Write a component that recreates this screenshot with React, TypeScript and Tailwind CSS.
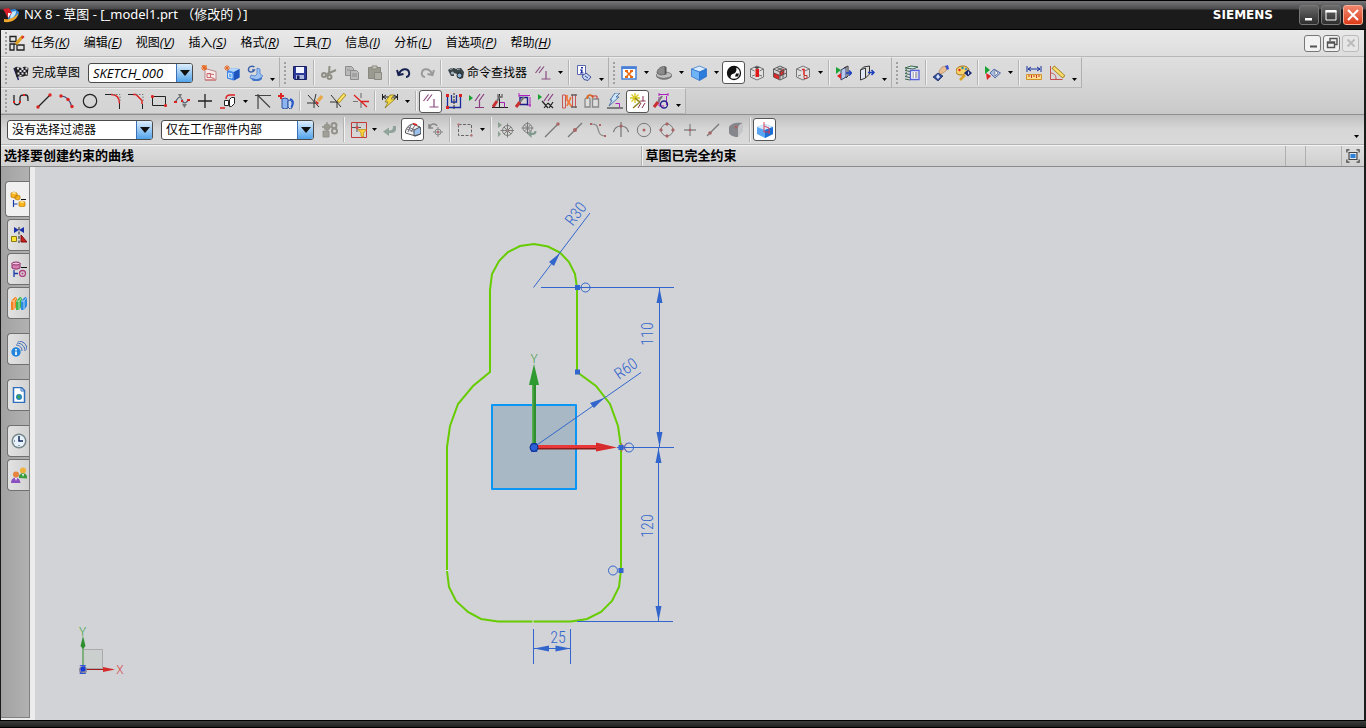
import React from 'react';
import clsx from 'clsx';

const cjk = "font-['Noto_Sans','Noto_Sans_CJK_SC',sans-serif]";

const icons: Record<string, React.ReactNode> = {
  // menu bar
  task: <g fill="none" stroke="#222" strokeWidth="1.3"><path d="M1 1.500h6v5h-6zM1 9h4v6h-4zM8 10h7v5h-7zM5 9h3" /><path d="M7 9l7-8" stroke="#e0a020" strokeWidth="3" /><path d="M13 1.500l1.500 1.500" stroke="#d33" strokeWidth="3" /></g>,
  // standard toolbar
  flag: <g><path d="M1 3l4.500 12" stroke="#226" strokeWidth="1.500" /><path d="M1.500 3c3-3 6 1 8 0 2-2 3-1 6 0l-1 8c-3-1-4 1-7 1-2-1-2 0-4 0z" fill="#222" /><path d="M4 2.500h2v2h-2zM8.500 3h2v2h-2zM12.500 2.500h2v2h-2zM6.500 5h2v2h-2zM10.500 5h2v2h-2zM4.500 7.500h2v2h-2zM8.500 7.500h2v2h-2zM12.500 7.500h1.500v2h-1.500zM6.500 10h2v1.500h-2z" fill="#e4e4f0" /></g>,
  sketchNew: <g fill="none" stroke="#b88"><path d="M4 3.500l11 3v8.500h-11z" fill="#f6ecec" /><path d="M6 8.500h3.500v4h-3.500zM6 8.500l7 1M9.500 12.500l4 1M4 15l11 0" stroke="#c66" /><path d="M0 0h6v5h-2z" fill="#e8701a" stroke="none" opacity=".6" /><path d="M0 3h6M3 0v6M1 1l4 4M5 1l-4 4" stroke="#e8601a" strokeWidth=".9" /></g>,
  orient: <g><path d="M3 5l6-2 6.500 1v8.500l-6 3-6.500-2z" fill="#3f86e6" /><path d="M3 5l6-2 6.500 1-5.500 3z" fill="#b4d6fb" /><path d="M10 7l5.500-3v8.500l-5.500 3z" fill="#1d55bc" /><path d="M4.500 8l3.500.7v4.300l-3.500-.7z" fill="#6db0f5" stroke="#cfe3ff" /><path d="M0 3h6M3 0v6M1 1l4 4M5 1l-4 4" stroke="#e8601a" strokeWidth=".9" /></g>,
  reattach: <g><path d="M7.500 2c-3-2-6.500 0-6 3s5 2.500 6 0h-2.500" fill="none" stroke="#3b62ac" strokeWidth="1.500" /><path d="M10 3l3 1v5l3 2-5 4-8-2 1-3 4 1 2-2z" fill="#9cc2f2" stroke="#4a7fd0" strokeWidth=".8" /><path d="M4 13c3 1.500 7 2 11-1v2c-3 3-8 3-10 1z" fill="#3f73c8" /></g>,
  save: <g><path d="M1.500 1.500h13v13h-12l-1-1z" fill="#2d3a9b" stroke="#16205f" /><path d="M4 2h8v6h-8z" fill="#f4f6ff" /><path d="M4 10h8v4h-8z" fill="#aeb8dc" /><path d="M5 10.500h2.500v3.500h-2.500z" fill="#16205f" /></g>,
  cut: <g stroke="#8e8e84" fill="none" strokeWidth="2"><path d="M8.500 1l-.500 8M15 5l-9 4" /><circle cx="8.500" cy="12" r="2" /><circle cx="3" cy="10" r="2" /></g>,
  copy: <g fill="#b9b9b9" stroke="#8c8c8c"><path d="M1.500 1.500h6l2 2v7h-8z" /><path d="M6.500 5.500h6l2 2v7h-8z" /><path d="M8 9h5M8 11h5M3 5h3" /></g>,
  paste: <g fill="#9b9a90" stroke="#8a897f"><path d="M1.500 2.500h12v11h-12z" /><path d="M5 1h5v3h-5z" fill="#c4c4bc" /><path d="M7.500 7.500h7v7h-7z" fill="#aeaea6" /></g>,
  undo: <path d="M3 9c2-6 9-6 10-2 1 3-1 5-3 5M1 5l1.500 5 5-1" fill="none" stroke="#17214f" strokeWidth="2" />,
  redo: <path d="M13 9c-2-6-9-6-10-2-1 3 1 5 3 5M15 5l-1.500 5-5-1" fill="none" stroke="#9a9a9a" strokeWidth="2" />,
  finder: <g><path d="M0 5l3-2 3 0 2 1 2-1h3l3 4-1 6-3 1-3-2v-3l-3-1v3l-3 0z" fill="#39434a" /><circle cx="11.500" cy="10.500" r="2.500" fill="#88b4d8" stroke="#222" /><circle cx="4.500" cy="8" r="1.600" fill="#a8b4bc" /><path d="M2 4.500l3-1M9 4.500l3-.500" stroke="#a8b0b4" /></g>,
  constraint: <g stroke="#8a4b80" fill="none" strokeWidth="1.200"><path d="M0.500 8l5-6.500M4 8l5-6.500M11 6v8M6.500 14h9" /></g>,
  info: <g><path d="M1.500 .5h8v9h-8z" fill="#fff" stroke="#5868b0" /><path d="M5 2h2v1.500h-2zM4 4.500h2.500v3h1v1h-3.500v-1h1v-2h-1z" fill="#1a2c9c" /><path d="M6 11l4-3 5 4-3 3.500-4-1z" fill="#c4d4f2" stroke="#40539a" /><path d="M9 11l3 2" stroke="#40539a" /></g>,
  fit: <g><path d="M1 2h14v12h-14z" fill="#fff" stroke="#4a80d6" strokeWidth="1.500" /><path d="M.5 1.500h15v2.500h-15z" fill="#4a80d6" /><path d="M5 6l6 6M11 6l-6 6" stroke="#e86a10" strokeWidth="1.500" /><path d="M4 5h3v2h-3zM9 5h3v2h-3zM4 11h3v2h-3zM9 11h3v2h-3z" fill="#e86a10" /></g>,
  clip: <g><path d="M0 10c1-2 4-3 8-3 4 0 7 1 8 3-1 4-14 5-16 0z" fill="#c0c0c0" stroke="#666" strokeWidth=".7" /><path d="M1 8c0-4 4-7 8-6.500v8l-5 .500z" fill="#8a8a8a" stroke="#555" strokeWidth=".7" /><path d="M9 1.500l1.500.500v7.500l-1.500 0z" fill="#555" /><path d="M0 10c2 4 13 4 16 0v1c-2 5-14 5-16 0z" fill="#777" /></g>,
  cube: <g stroke="#2a6cc9" strokeWidth=".7"><path d="M0.500 4l8-3 7 3-7 3z" fill="#d8ecfd" /><path d="M0.500 4l8 3v8.500l-8-4z" fill="#6fb4f5" /><path d="M8.500 7l7-3v7.500l-7 4z" fill="#2d7ddb" /></g>,
  contrast: <g><circle cx="8" cy="8" r="6.500" fill="#fff" stroke="#111" strokeWidth="1.300" /><path d="M9.500 1.500c-8-2-10.500 8-5 12 0-4 1.500-4.500 3.500-5s3.500-4 1.500-7z" fill="#111" /><path d="M10 8.500h3l-1 3h-3z" fill="#111" /></g>,
  cubeR1: <g fill="none" stroke="#777"><path d="M1.500 4l6.500-3 6.500 3v8l-6.500 3-6.500-3z" fill="#e0e0e0" /><path d="M1.500 4l4 2M14.500 4l-4 2M3 11l3-1M13 11l-3-1" /><path d="M6.500 4h3.500v8h-3.500z" fill="#e01818" stroke="none" /><path d="M5 2.500l3-1 3 1-3 1.500z" fill="#444" stroke="none" /></g>,
  cubeR2: <g fill="none" stroke="#555" strokeWidth=".9"><path d="M1.500 4l6.500-3 6.500 3v8l-6.500 3-6.500-3z" fill="#d0d0d0" /><path d="M2 8l5 2v4l-5-2zM8 6l4-2v5l-4 2z" fill="#e42a2a" stroke="#a11" strokeWidth=".5" /><path d="M1.500 4l6.500 3 6.500-3M8 7v8M5 2.500l6 3M11 2.500l-6 3M1.500 8l6.500 3 6.500-3M11 6v7" /></g>,
  cubeR3: <g fill="none" stroke="#777"><path d="M1.500 4l6.500-3 6.500 3v8l-6.500 3-6.500-3z" fill="#e0e0e0" /><path d="M1.500 4l5 2M14.500 4l-5 2M3 11l3-1" /><path d="M7 4.500h2v5.500" stroke="#d22" strokeWidth="1.500" /><path d="M9 10.500h3v3h-3z" stroke="#b33" /></g>,
  moveIn: <g><path d="M5 5l5-3v10l-5 3z" fill="#b7c9ef" stroke="#3a3f60" /><path d="M8 3l4-2v10l-2 2" fill="none" stroke="#333" /><path d="M10 8h5M13 5.500l2.500 2.500-2.500 2.500" stroke="#1a3ec0" fill="none" strokeWidth="1.500" /><path d="M0 2l5 3-5 4z" fill="#1aa233" /><path d="M5 8l-4 3 4 3z" fill="#d22" /></g>,
  moveOut: <g><path d="M1.500 5l5-2v10l-5 2z" fill="#dfe6f6" stroke="#333" /><path d="M1.500 5l3-3 6-1v8l-4 4" fill="none" stroke="#333" /><path d="M9 7.500h6M12.500 5l2.500 2.500-2.500 2.500" stroke="#1a3ec0" fill="none" strokeWidth="1.500" /></g>,
  layers: <g><path d="M1 3l6-2 7 1-5 2z" fill="#d8ebe0" stroke="#3d6655" /><path d="M1 5.500l5 1M1 8.500l5 1M1 11.500l5 1M1 14l5 1M1 5.500l2-1M1 8.500l2-1M1 11.500l2-1" fill="none" stroke="#3d6655" /><path d="M6.500 5.500h8.500v9h-8.500z" fill="#fff" stroke="#5560d8" strokeWidth="1.300" /><path d="M8.500 8h1.500M11 8h2.500M8.500 10h1.500M11 10h2.500M8.500 12h1.500M11 12h2.500" stroke="#667" /></g>,
  handTag: <g><path d="M6 6l3-4 4-1 1 4-4 3-3 1z" fill="#e7bf94" stroke="#a97a4c" strokeWidth=".6" /><path d="M12 1l3-1 1 4-2 1z" fill="#3a4fd0" /><path d="M0 12l5-4 5 3-5 5z" fill="#34509c" stroke="#111d50" strokeWidth=".7" /><path d="M5 9l2 3-2 2-2-2z" fill="#d8e4fa" /></g>,
  palette: <g><path d="M0 6c0-6 12-7 13-1 0 2-3 2-4 3s-1 2-4 2-5-1-5-4z" fill="#f6d268" stroke="#a8741a" /><circle cx="3.500" cy="5" r="1.200" fill="#d22" /><circle cx="6.500" cy="3" r="1.200" fill="#28a" /><circle cx="10" cy="4" r="1.200" fill="#48c" /><path d="M8 8l4-3.500 4 3.500-4 3.500z" fill="#1b2b6e" /><path d="M12 6l1.500 2-1.500 2z" fill="#dfe6ff" /><path d="M4 15l5-5" stroke="#d8a322" strokeWidth="2.500" /></g>,
  tagFlow: <g><path d="M0 1l5 4-5 4z" fill="#1aa233" /><path d="M1 8l5 3-4 4z" fill="#d22" /><path d="M5 8l4-4 6.500 4-5.500 5z" fill="#a9bce0" stroke="#5a6ea8" /><path d="M10 5l3 3-3 3z" fill="#fff" stroke="#345" strokeWidth=".5" /></g>,
  measure: <g><path d="M1 1v6M15 1v6M2 4h12M5 2l-3 2 3 2M11 2l3 2-3 2" stroke="#16309a" fill="none" /><path d="M.5 9.500h15v5h-15z" fill="#ffe08a" stroke="#d1922a" /><path d="M3 10v2M5.500 10v3M8 10v2M10.500 10v3M13 10v2" stroke="#c33" /></g>,
  angle: <g fill="none"><path d="M1.500 1v13.500h12M1 8c4 0 6 2 6 6" stroke="#c34d4d" /><path d="M4 2l11 10" stroke="#a37b17" strokeWidth="4" /><path d="M4.500 2.500l10 9" stroke="#f7dd6e" strokeWidth="2.500" /></g>,
  // sketch curves
  profile: <g fill="none" stroke="#222" strokeWidth="1.300"><path d="M1 2v6c0 5 6 5 6 0v-3c0-3 2-3 4-3h2c2 0 2 2 2 6" /><path d="M0 8h2v2h-2zM6 8h2v2h-2zM10 1h2v2h-2z" fill="#d22" stroke="none" /></g>,
  line: <g><path d="M2 14l12-12" stroke="#222" strokeWidth="1.200" /><circle cx="2" cy="14" r="1.700" fill="#d22" /><circle cx="14" cy="2" r="1.700" fill="#d22" /></g>,
  arc: <g><path d="M2 3c6 0 9 4 11 11" stroke="#447" fill="none" strokeWidth="1.200" /><circle cx="2" cy="3" r="1.700" fill="#d22" /><circle cx="9" cy="6.500" r="1.700" fill="#d22" /><circle cx="13" cy="13.500" r="1.700" fill="#d22" /></g>,
  circle: <circle cx="8" cy="8" r="6.700" fill="none" stroke="#222" strokeWidth="1.200" />,
  fillet: <g fill="none"><path d="M0 1.500h6M14.500 10v6" stroke="#222" /><path d="M6 1.500c6 0 8.500 3 8.500 9" stroke="#d22" strokeWidth="1.500" /><path d="M8 1.500h7v7" stroke="#777" strokeDasharray="1.500 1.500" /></g>,
  chamfer: <g fill="none"><path d="M0 1.500h5M14.500 11v5" stroke="#222" /><path d="M5 1.500h3l6 6v3.500" stroke="#d22" strokeWidth="1.500" /><path d="M8 1.500h7v7" stroke="#777" strokeDasharray="1.500 1.500" /></g>,
  rect: <g><path d="M1.500 3.500h13v9h-13z" fill="none" stroke="#222" /><circle cx="1.500" cy="3.500" r="1.600" fill="#d22" /><circle cx="14.500" cy="12.500" r="1.600" fill="#d22" /></g>,
  spline: <g><path d="M0 9c3 0 3-5 6-5 2 0 2 6 5 6 2 0 2-3 5-3" fill="none" stroke="#456" strokeWidth="1.200" /><path d="M6 3l4 10" stroke="#999" /><path d="M4 1h4l-2 4zM8 11h5l-2.500 4z" fill="#777" /><path d="M0 8h3v2h-3zM13 6h3v2h-3zM7 7h2v2h-2z" fill="#d22" /></g>,
  point: <path d="M8 1v14M1 8h14" stroke="#222" strokeWidth="1.300" />,
  offset: <g fill="none"><path d="M0 15h5M6 6c0-3 2-4 4-4h5" stroke="#d22" strokeWidth="1.500" /><path d="M4.500 7.500h4v5h-4zM9.500 6.500l2-2h3v6l-3 3h-2z" fill="#fff" stroke="#222" /></g>,
  pattern: <path d="M0 2.500h16M3 1v15M3 2.500l12 12" stroke="#444" fill="none" strokeWidth="1.200" />,
  project: <g><path d="M4 6l3-1 3 1v9l-3 1-3-1z" fill="#8cb4ee" stroke="#33539e" /><path d="M10 8l2-1 2 2v6l-2 1-2-2z" fill="#c7d8f5" stroke="#33539e" /><path d="M3 0v6M0 3h6" stroke="#d22" strokeWidth="2" /><path d="M12 6c4 1 4 6 1 8" stroke="#1a4fd0" fill="none" strokeWidth="1.500" /></g>,
  quickTrim: <g><path d="M1 2l11 12M7 15v-6l2-8M0 10h9" stroke="#333" fill="none" /><path d="M11 8l4-5" stroke="#e8a848" strokeWidth="3.500" /><path d="M8 7l4 3-2 2z" fill="#d22" /></g>,
  quickExtend: <g><path d="M1 2l10 12M7 15v-6M0 9h8" stroke="#333" fill="none" /><path d="M8 9l7-8" stroke="#a8820e" strokeWidth="3.500" /><path d="M8.500 8.500l6-7" stroke="#ffe76a" strokeWidth="2" /></g>,
  corner: <g fill="none" strokeWidth="1.200"><path d="M8 0v5M8 9v6M0 8.500h5" stroke="#777" /><path d="M1 2l13 12M8 8.500h8" stroke="#d22" strokeWidth="1.300" /></g>,
  rapidDim: <g><path d="M.5 1v6M15.500 1v6M1 4h14M4 2l-3 2 3 2M12 2l3 2-3 2" fill="none" stroke="#222" /><path d="M8 2h4l-3 4h4l-10 9 3-6h-3z" fill="#f4d940" stroke="#7c6a12" strokeWidth=".7" /></g>,
  autoCon: <g fill="none"><path d="M1.500 2v12.500h13v-12.500M5.500 2v7h5v-7" stroke="#1a2c9c" strokeWidth="1.300" /><path d="M8 0v16" stroke="#222" strokeDasharray="2 1" /><path d="M0 1h3v3h-3zM13 1h3v3h-3zM0 13h3v3h-3z" fill="#d22" /></g>,
  showCon: <g><path d="M0 2l4 3-4 3z" fill="#18a030" /><path d="M6 8l5-7M10 8l5-7M10.500 8v6M6 14.500h9" stroke="#8a3b80" strokeWidth="1.200" fill="none" /></g>,
  wrench: <g><path d="M7.500 1v13M0 14.500h16" stroke="#222" fill="none" /><path d="M8 9.500h4.500v5" stroke="#a01fb0" fill="none" /><path d="M1 14l4-6" stroke="#c73030" strokeWidth="3" /><path d="M5 8l3-5" stroke="#777" strokeWidth="2" /><path d="M6 1v3h4v-3" stroke="#666" fill="none" strokeWidth="1.300" /></g>,
  wrenchDim: <g><path d="M4 2.500h11M4 0v4M15 4v10M12 12h4" stroke="#b01fc0" fill="none" /><path d="M5 4.500h7.500v7h-7.500z" stroke="#1b1b8c" strokeWidth="1.400" fill="none" /><path d="M1 14l4-5" stroke="#c73030" strokeWidth="3" /><path d="M5 9l4-5" stroke="#777" strokeWidth="2" /></g>,
  showNone: <g><path d="M0 1l4 3-4 3z" fill="#18a030" /><path d="M6 8l5-7M10 8l5-7" stroke="#8a3b80" strokeWidth="1.200" /><path d="M4 8l6 7M10 10l-4 5M10 10l5 5M15 9l-4 6" stroke="#222" strokeWidth="1.200" /></g>,
  mirror: <g fill="none"><path d="M1.500 15v-13h3v13zM11.500 1v14M14.500 1v14" stroke="#c55" /><path d="M6 2v5l5 7M6 13l4-9" stroke="#f07a3a" strokeWidth="1.800" /><path d="M10 2h6M10 14h6" stroke="#666" strokeWidth="1.500" /></g>,
  altSol: <g fill="none" stroke="#888"><path d="M1 14v-8l3-2 2 2v8zM8.500 14v-8h6v8z" fill="#ddd" strokeWidth="1.300" /><path d="M3 6c0-5 5-5 6-1" stroke="#d86a28" strokeWidth="1.800" /><path d="M8 3h5v3" stroke="#c33" /></g>,
  infer: <g><path d="M0 15h16" stroke="#222" fill="none" /><path d="M8.500 10.500h4v4" stroke="#b01fc0" fill="none" /><path d="M8 0h5l-4 4h3l-10 9 3-6h-2z" fill="#cde3f8" stroke="#37609b" strokeWidth=".8" /></g>,
  createCon: <g><path d="M5 0v10M0 5h10M1.500 1.500l7 7M8.500 1.500l-7 7" stroke="#d8c820" strokeWidth="1.300" /><path d="M5 5l5 4-7 6" stroke="#8c8424" fill="none" strokeWidth="1.500" /><path d="M13 3v5M10.500 8h5M8 15l3-5M12 15l3-5" stroke="#8a2b50" /></g>,
  dimSettings: <g><path d="M6 1.500h9M6 0v3M15 0v3M13.500 3v9" stroke="#b01fc0" fill="none" /><path d="M6 4v9h5" stroke="#b01fc0" fill="none" /><circle cx="11" cy="11.500" r="3.500" fill="none" stroke="#1b1b8c" strokeWidth="1.300" /><path d="M1 14l4-5" stroke="#c73030" strokeWidth="3" /><path d="M5 9l4-6" stroke="#777" strokeWidth="2" /></g>,
  // selection bar
  chain: <g fill="none" stroke="#92928a"><path d="M5 0v9M0 5h9" strokeWidth="1.300" /><circle cx="5" cy="5" r="2.500" strokeWidth="1.500" /><path d="M1 9h6v6h-6z" fill="#a09f98" /><circle cx="12" cy="3.500" r="2.500" strokeWidth="2" /><circle cx="12.500" cy="9" r="2.500" strokeWidth="2" /></g>,
  filter: <g fill="none"><path d="M.5 .5h15v15h-15z" stroke="#c33c3c" /><path d="M6 1v9M1 5.500h9" stroke="#555" /><circle cx="6" cy="5.500" r="1.500" fill="#d44" /><path d="M7 7.500h8.500l-3 3.500v4l-2.500-1v-3z" fill="#f9cf3a" stroke="#c08a14" strokeWidth=".7" /></g>,
  back: <path d="M14 4v3c0 4-4 4-7 4v3l-6-4.500 6-4v3c3 0 4-1 4-4.500z" fill="#8fa39b" />,
  eraser: <g stroke="#444" strokeWidth=".9"><path d="M.5 9c1-4 4-6.500 7-7l7.500 3c1 2 1 5 .500 7l-5 2-10-3z" fill="#f0f0f0" /><path d="M9 8l6-3c1 2 1 5 .500 7l-6.500 2z" fill="#9cc0ec" /><path d="M3 5l7 3M2 7l7 2.500M6 3l-3 7M10 3l-4 7" stroke="#667" /><path d="M8 1.500l4 1.500" stroke="#d22" strokeWidth="1.500" /></g>,
  rotSnap: <g fill="none" stroke="#888"><path d="M2 6c0-5 6-5 7-2M1 2v4h4" strokeWidth="1.500" /><circle cx="10" cy="10" r="3" /><path d="M10 5v10M5 10h10" /><circle cx="10" cy="10" r=".8" stroke="#b66" /></g>,
  marquee: <g fill="none"><path d="M1.500 2.500h13v11h-13z" stroke="#666" strokeDasharray="3 1.500" /><circle cx="1.500" cy="2.500" r="1.200" fill="#b77" /><circle cx="14.500" cy="13.500" r="1.200" fill="#b77" /></g>,
  snapAll: <g fill="none" stroke="#7c7c7c"><circle cx="9.500" cy="8.500" r="5" /><path d="M9.500 1.500v14M2.500 8.500h13.500M6 5l7 7M13 5l-7 7" /><path d="M0 0l4 3-4 3zM0 9l3 3-3 3z" fill="#8a9f90" stroke="none" /><circle cx="9.500" cy="8.500" r="1.500" fill="#a88" /></g>,
  snapNone: <g fill="none" stroke="#7c7c7c"><circle cx="6.500" cy="6" r="4.500" /><path d="M6.500 0v12M.5 6h12M3.500 3l6 6M9.500 3l-6 6" /><path d="M15.500 9c0 4-3 4-5 4v3l-4-4 4-3v2c2 0 3-1 3-2z" fill="#80998c" stroke="none" /></g>,
  endPt: <g><path d="M1 15l13-13" stroke="#777" strokeWidth="1.200" /><circle cx="14" cy="2" r="1.700" fill="#a66" /></g>,
  midPt: <g><path d="M1 15l14-14" stroke="#777" strokeWidth="1.200" /><circle cx="8" cy="8" r="2" fill="#a66" /></g>,
  ctrlPt: <g fill="none" stroke="#888" strokeWidth="1.200"><path d="M1 2c5 0 6 1 7 5s2 7 7 7" /><path d="M0 1h2v2h-2zM9 2h2v2h-2zM14 13h2v2h-2z" fill="#a66" stroke="none" /></g>,
  interPt: <g fill="none" stroke="#777" strokeWidth="1.200"><path d="M8 0v15M.5 10c2-8 13-8 15 0" /><circle cx="8" cy="4" r="1.600" fill="#a66" stroke="none" /></g>,
  centerPt: <g fill="none" stroke="#777"><circle cx="8" cy="8" r="6.700" /><circle cx="8" cy="8" r="1.500" fill="#a66" stroke="none" /></g>,
  quadPt: <g fill="none" stroke="#777"><circle cx="8" cy="8" r="6" /><path d="M8 0l2 2-2 2-2-2zM8 12l2 2-2 2-2-2zM2 6l2 2-2 2-2-2zM14 6l2 2-2 2-2-2z" fill="#a66" stroke="none" /></g>,
  existPt: <g><path d="M8 2v12M2 8h12" stroke="#888" strokeWidth="1.300" /><circle cx="8" cy="8" r="1.300" fill="#a66" /></g>,
  onCurve: <g><path d="M2 14l12-12" stroke="#777" strokeWidth="1.200" /><circle cx="5" cy="11" r="1.800" fill="#a66" /></g>,
  onFace: <g><path d="M1 5c2-4 8-5 14-4-3 1-5 3-5 6v8c-5 0-8-2-9-4z" fill="#85878c" /><path d="M15 1v8l-5 6v-8c0-3 2-5 5-6z" fill="#c4c6c8" /><circle cx="8" cy="5" r="1.500" fill="#a66" /></g>,
  wcsCube: <g><path d="M0 5l8-3 8 3v7l-8 4-8-4z" fill="#5aa6f4" /><path d="M0 5l8-3 8 3-8 3z" fill="#d4eaff" /><path d="M8 8l8-3v7l-8 4z" fill="#1d6fd6" /><path d="M7 0v10h6M7 4l5 2v6" fill="none" stroke="#e0384a" strokeWidth=".9" /></g>,
  fullscreen: <g fill="none" stroke="#444" strokeWidth="1.400"><path d="M1 4v-3h3M12 1h3v3M15 12v3h-3M4 15h-3v-3" /><path d="M3.500 4h9v8h-9z" fill="#fff" /><path d="M5 5.500h6v5h-6z" fill="#2f7fd8" stroke="none" /></g>,
  // resource bar
  assembly: <g><path d="M1 2l3-1 3 1v4l-3 1-3-1zM5 5l3-1 2 1v3l-2 1-3-1zM9 11l3-1 3 1v4l-3 1-3-1z" fill="#fcb61c" stroke="#b97a08" strokeWidth=".7" /><path d="M1 2l3 1 3-1-3-1zM9 11l3 1 3-1-3-1z" fill="#ffe9a0" /><path d="M3.500 9v7M3.500 13h4" stroke="#1a3ea8" strokeWidth="1.200" /><path d="M11 8.500h5" stroke="#111" /></g>,
  constraints: <g><path d="M3 0l5 3 5-3v6l-5-3-5 3z" fill="#1a2fa8" /><path d="M8 0v16" stroke="#222" strokeDasharray="3 1.500" /><path d="M.5 9.500h5v5h-5z" fill="#ffe333" stroke="#8c7a10" /><path d="M10 8v7h6z" fill="#c8201c" stroke="#801010" /></g>,
  partNav: <g fill="none"><path d="M1 2v5c2 1.500 6 1.500 8 0v-5z" fill="#d87fb2" stroke="#8c2f68" /><ellipse cx="5" cy="2.500" rx="4" ry="1.500" fill="#f4c4de" stroke="#8c2f68" /><path d="M3 9v7M3 12.500h4" stroke="#1a3ea8" strokeWidth="1.300" /><circle cx="11.500" cy="12.500" r="3" stroke="#b0407e" strokeWidth="1.300" /><circle cx="11.500" cy="12.500" r="1" fill="#b0407e" /><path d="M10 6.500h6" stroke="#111" /></g>,
  library: <g><path d="M0 6l4-4 2 0v9l-3 4h-3z" fill="#f58220" /><path d="M5 6l4-4 2 0v9l-3 4h-3z" fill="#3cb54a" /><path d="M10 6l4-4 2 0v9l-3 4h-3z" fill="#2c8be0" /><path d="M3 6v9M8 6v9M13 6v9M0 6h3l3-4M5 6h3l3-4M10 6h3l3-4" fill="none" stroke="#fff" strokeWidth=".6" /></g>,
  web: <g fill="none"><circle cx="5" cy="11" r="4.700" fill="#2384dc" /><path d="M5 8v1.500M5 10.500v3.500" stroke="#fff" strokeWidth="1.700" /><path d="M5 4c4 0 6 3 6 6M6 2c5 0 8 4 8 8M7 0c5 0 9 3 9 9" stroke="#3767b8" /></g>,
  history: <g><path d="M2.500 .5h8l3 3v12h-11z" fill="#fff" stroke="#2e6fbe" strokeWidth="1.500" /><path d="M10 .5v3.500h3.500" fill="none" stroke="#2e6fbe" /><circle cx="8" cy="10" r="3" fill="#2a87b8" /><path d="M6 9l2-1 1 2-1 2z" fill="#3faa3c" /></g>,
  clock: <g><circle cx="8" cy="8" r="7.500" fill="#788" /><circle cx="8" cy="8" r="6" fill="#e8f2fd" /><path d="M8 3v5h4" stroke="#112a55" fill="none" strokeWidth="1.500" /><path d="M3 8h1M8 12v1" stroke="#345" /></g>,
  roles: <g><circle cx="12" cy="3.500" r="3" fill="#f0b23c" /><path d="M8 11c-1-6 8-6 8-1v1.500z" fill="#3a9c3e" /><path d="M11 7h2l-1 3z" fill="#fff" /><circle cx="5" cy="7.500" r="3" fill="#e6843c" /><path d="M0 16c0-7 9-7 9.500 0z" fill="#8a50c0" /><path d="M4 11h2l-1 3z" fill="#fff" /></g>,
};

function Icon({ name }: { name: string }) {
  return <svg viewBox="0 0 16 16" className="size-4 shrink-0" aria-hidden="true">{icons[name]}</svg>;
}

function Tool({ name, on }: { name: string; on?: boolean }) {
  return <button type="button" aria-label={name} className={clsx('flex h-[23px] w-[23px] shrink-0 items-center justify-center', on && 'rounded-[3px] border border-[#555] bg-white')}>
      <Icon name={name} />
    </button>;
}

function Caret({ low, tight }: { low?: boolean; tight?: boolean }) {
  return <button type="button" aria-label="more" className={clsx('flex shrink-0 justify-center', tight ? 'w-2' : 'w-3', low ? 'self-end pb-1.5' : 'self-center')}>
      <svg viewBox="0 0 5 3" className="h-[3px] w-[5px]"><path d="M0 0h5l-2.500 3z" fill="#000" /></svg>
    </button>;
}

function Grip() {
  return <span className="flex h-full w-2 shrink-0 items-center justify-end pr-[2px]">
      <span className="h-[22px] border-l-2 border-dotted border-[#a0a0a0]" />
    </span>;
}

function Divider() {
  return <span className="flex w-1.5 shrink-0 justify-center self-stretch py-[2px]">
      <span className="border-l border-r border-l-[#b4b4b4] border-r-[#f2f2f2]" />
    </span>;
}

// "|" divider, "v" menu arrow, "," tight menu arrow, ">" overflow arrow, "*name" pressed button
function Tools({ items }: { items: string }) {
  return <>
      {items.split(' ').map((item, i) => {
      if (item === '|') return <Divider key={i} />;
      if (item === 'v') return <Caret key={i} />;
      if (item === ',') return <Caret key={i} tight />;
      if (item === '>') return <Caret key={i} low />;
      if (item[0] === '*') return <Tool key={i} name={item.slice(1)} on />;
      return <Tool key={i} name={item} />;
    })}
    </>;
}

function Band({ children }: { children: React.ReactNode }) {
  return <div className="flex items-center border-b border-r border-t border-b-[#b8b8b8] border-r-[#b0b0b0] border-t-[#ececec] bg-[#dadada]/60 pr-px">
      <Grip />
      {children}
    </div>;
}

function Dropdown({ label, value, className }: { label: string; value: string; className: string }) {
  return <div className={clsx('relative flex h-5 shrink-0 rounded-[3px] border border-[#4a4a4a] bg-white', className)}>
      <select aria-label={label} className="h-full w-full appearance-none bg-transparent pl-1 outline-none">
        <option>{value}</option>
      </select>
      <span className="pointer-events-none absolute inset-y-0 right-0 flex w-4 items-center justify-center rounded-r-[2px] border-l border-[#3b6fb8] bg-linear-to-b from-[#dceefc] to-[#4fa3ea]">
        <svg viewBox="0 0 10 6" className="h-1.5 w-2.5"><path d="M0 0h10l-5 6z" fill="#111" /></svg>
      </span>
    </div>;
}

const menus = [['任务', 'K'], ['编辑', 'E'], ['视图', 'V'], ['插入', 'S'], ['格式', 'R'], ['工具', 'T'], ['信息', 'I'], ['分析', 'L'], ['首选项', 'P'], ['帮助', 'H']];

function TitleBar() {
  const box = 'flex size-5 items-center justify-center rounded-[3px] border border-[#777] bg-linear-to-b from-[#6a6a6a] to-[#2e2e2e]';
  return <header className="flex h-[30px] shrink-0 items-center border-y border-black bg-[linear-gradient(#77777b_0,#4a4a4c_8px,#1b1b1b_9px)] pl-[3px] pr-[3px] text-white">
      <svg viewBox="0 0 16 16" className="size-4">
        <path d="M5 3l7-1 4 3c0 5-5 8-11 9z" fill="#2f86d8" />
        <path d="M8 5l5-1c0 4-2 6-6 8z" fill="#c4e8fb" />
        <path d="M0 2l6-1 3 5-4 5z" fill="#d8202c" />
        <path d="M5 6l3 0-3 5z" fill="#fff" />
        <path d="M1 12c5 1 11-1 14-6 0 6-6 10-14 9z" fill="#f3a62c" />
      </svg>
      <h1 className="ml-[5px] whitespace-pre text-[13px]">NX 8 - 草图 - [_model1.prt （修改的 ）]</h1>
      <span className="ml-auto mr-[26px] font-['DejaVu_Sans'] text-xs font-bold">SIEMENS</span>
      <div className="flex gap-[2px]">
        <button type="button" aria-label="最小化" className={box}><svg viewBox="0 0 14 14" className="size-3.5"><path d="M3 10h7v2.500h-7z" fill="#fff" /></svg></button>
        <button type="button" aria-label="最大化" className={box}><svg viewBox="0 0 14 14" className="size-3.5"><path d="M2 3h10v9h-10z" fill="none" stroke="#fff" /><path d="M1.500 2h11v2.500h-11z" fill="#fff" /></svg></button>
        <button type="button" aria-label="关闭" className="flex size-5 items-center justify-center rounded-[3px] border border-[#f4b09c] bg-linear-to-b from-[#f0866c] to-[#dc3a14]"><svg viewBox="0 0 14 14" className="size-3.5"><path d="M2 2l10 10M12 2l-10 10" stroke="#fff" strokeWidth="2" /></svg></button>
      </div>
    </header>;
}

function MenuBar() {
  const box = 'flex size-[17px] items-center justify-center rounded-[3px] border border-[#777] bg-[#f2f2f2]';
  return <div className="flex h-[27px] shrink-0 items-center border-b border-[#b8b8b8] bg-linear-to-b from-[#e9e9e9] to-[#dddddd]">
      <Grip />
      <svg viewBox="0 0 16 16" className="size-4" aria-hidden="true">{icons.task}</svg>
      <nav className="ml-1.5 flex gap-3.5">
        {menus.map(([name, key]) => <a key={name} href="#" className="whitespace-nowrap text-xs">
            {name}<i className="font-['Open_Sans'] text-[13px]">(<u>{key}</u>)</i>
          </a>)}
      </nav>
      <div className="ml-auto mr-[5px] flex gap-[2px]">
        <button type="button" aria-label="最小化窗口" className={box}><svg viewBox="0 0 12 12" className="size-3"><path d="M3 9.500h7" stroke="#555" strokeWidth="2" /></svg></button>
        <button type="button" aria-label="还原窗口" className={box}><svg viewBox="0 0 12 12" className="size-3"><path d="M4 4v-2.500h7v6h-2M1.500 5h7v5.500h-7zM1.500 6h7" fill="none" stroke="#555" strokeWidth="1.400" /></svg></button>
        <button type="button" aria-label="关闭窗口" disabled className="flex size-[17px] items-center justify-center rounded-[3px] border border-[#bbb] bg-[#e6e6e6]"><svg viewBox="0 0 12 12" className="size-3"><path d="M2.500 2.500l7 7M9.500 2.500l-7 7" stroke="#bbb" strokeWidth="2" /></svg></button>
      </div>
    </div>;
}

function Toolbars() {
  return <div className="shrink-0 border-b border-[#8f8f8f] bg-linear-to-b from-[#e0e0e0] to-[#c9c9c9]">
      <div className="flex h-[31px]">
        <Band>
          <button type="button" className="flex items-center text-xs">
            <span className="flex w-[23px] justify-center"><Icon name="flag" /></span>完成草图
          </button>
          <Dropdown label="草图名" value="SKETCH_000" className="ml-2 mr-1 w-[105px] font-['Open_Sans'] text-[13px] italic" />
          <Tools items="sketchNew orient reattach >" />
        </Band>
        <Band>
          <Tools items="save | cut copy paste | undo redo |" />
          <button type="button" className="mr-1 flex items-center text-xs">
            <span className="flex w-[23px] justify-center"><Icon name="finder" /></span>命令查找器
          </button>
          <Tools items="constraint v | info >" />
        </Band>
        <Band>
          <Tools items="fit v clip v cube v *contrast cubeR1 cubeR2 cubeR3 v | moveIn moveOut >" />
        </Band>
        <Band>
          <Tools items="layers | handTag palette | tagFlow v | measure angle >" />
        </Band>
      </div>
      <div className="flex h-[26px]">
        <Band>
          <Tools items="profile line arc circle fillet chamfer rect spline point offset v pattern project | quickTrim quickExtend corner | rapidDim v | *constraint autoCon showCon wrench wrenchDim showNone mirror altSol infer *createCon dimSettings >" />
        </Band>
      </div>
    </div>;
}

function SelectionBar() {
  return <div className="flex h-[30px] shrink-0 items-center border-b border-[#b4b4b4] bg-[linear-gradient(#c0c0c0,#d6d6d6_14px,#dadada)] pl-1.5">
      <Dropdown label="选择过滤器" value="没有选择过滤器" className="mr-2 w-[146px] text-xs" />
      <Dropdown label="选择范围" value="仅在工作部件内部" className="mr-1 w-[153px] text-xs" />
      <Tools items="chain | filter , back *eraser rotSnap | marquee v | snapAll snapNone endPt midPt ctrlPt interPt centerPt quadPt existPt onCurve onFace | *wcsCube" />
      <span className="ml-auto mr-0.5 flex self-stretch"><Caret low /></span>
    </div>;
}

function StatusBar() {
  return <div className="flex h-[22px] shrink-0 border-b border-t border-b-[#8a8a8a] border-t-[#f4f4f4] bg-linear-to-b from-[#dedede] to-[#d0d0d0] text-[13px] font-bold leading-[18px]">
      <p className="w-[47%] border-r border-[#b0b0b0] pl-[3px]">选择要创建约束的曲线</p>
      <p className="flex-1 border-l border-[#f0f0f0] pl-[3px]">草图已完全约束</p>
      <span className="w-5 border-l border-[#b0b0b0]" />
      <span className="w-9 border-l border-[#b0b0b0]" />
      <button type="button" aria-label="全屏" className="flex w-[23px] items-center justify-center border-l border-[#b0b0b0]">
        <svg viewBox="0 0 16 16" className="size-3.5">{icons.fullscreen}</svg>
      </button>
    </div>;
}

function ResourceTab({ name, active }: { name: string; active?: boolean }) {
  return <button type="button" aria-label={name} className={clsx('flex items-center justify-center rounded-l-[4px] border border-r-0 border-[#707070]', active ? 'h-9 w-6 bg-[#f0f0f0]' : 'h-8 w-[22px] bg-linear-to-r from-[#e2e2e2] to-[#d2d2d2]')}>
      <Icon name={name} />
    </button>;
}

function ResourceBar() {
  return <aside className="flex w-[34px] shrink-0 border-b-2 border-r-[5px] border-[#ececec] bg-linear-to-r from-[#a2a2a2] to-[#b2b2b2]">
      <div className="flex w-full flex-col items-end gap-3.5 border-b border-r border-[#808080] pt-3.5">
        <div className="flex flex-col items-end gap-[2px]">
          <ResourceTab name="assembly" active />
          <ResourceTab name="constraints" />
          <ResourceTab name="partNav" />
          <ResourceTab name="library" />
        </div>
        <ResourceTab name="web" />
        <ResourceTab name="history" />
        <div className="flex flex-col items-end gap-[2px]">
          <ResourceTab name="clock" />
          <ResourceTab name="roles" />
        </div>
      </div>
    </aside>;
}

const dimText = "font-['Liberation_Sans_Narrow','Roboto_Condensed','Roboto',sans-serif] text-base font-light";
const axisText = "font-['Roboto',sans-serif] text-xs font-light";

function Sketch() {
  return <svg viewBox="35 167 700 500" className="h-[500px] w-[700px]">
      <path d="M492 405h84v84h-84z" fill="#a8b8c5" stroke="#0a96f5" strokeWidth="2" strokeLinejoin="round" />

      <path d="M490 372V290L492 274 499 261 508 252 520 246 534 244 548 246.500 560 252.500 569 262 575 274 577 288V372L596 386 610 404 618 426 621 447V570L619 587 612 601 601 612 587 619 571 621.500H498L481 619 468 612 456 601 449 587 447 571V447L450 426 458 404 473 386z" fill="none" stroke="#66cc00" strokeWidth="2" />
      <path d="M533 620v3M446 570.500h3" stroke="#dfe6d4" />

      {/* axes */}
      <path d="M532 385h4v62h-4z" fill="#2f8f2f" />
      <path d="M532 385h1.500v62h-1.500z" fill="#57ad50" />
      <path d="M534 364l5 21h-10z" fill="#2f9a2f" />
      <path d="M534 445h63v4h-63z" fill="#e83838" />
      <path d="M534 448h63v1.500h-63z" fill="#8c1c1c" />
      <path d="M596 442.500l21 5-21 4z" fill="#d82c2c" />
      <g className={axisText} textAnchor="middle">
        <text x="534" y="363" fill="#3a9b3a">Y</text>
        <text x="624" y="452" fill="#d04a5a">X</text>
        <text x="534" y="452" fill="#1a3ee0">Z</text>
      </g>
      <circle cx="534" cy="447.500" r="4" fill="#2b5fd8" stroke="#0a2a80" />

      {/* dimension lines */}
      <g stroke="#3366cc" fill="none">
        <path d="M541 287.500h133M617 447.500h57M577 621.500h96M659.500 288v159M658.500 448v173M533.500 629v35M570.500 629v35M534 648.500h37M533.500 287.500L590 213M534 447L641 372.500" />
        <circle cx="585.500" cy="287.500" r="4.500" />
        <circle cx="629" cy="447.500" r="4.500" />
        <circle cx="613" cy="570.500" r="4.500" />
      </g>
      <g fill="#3366cc">
        <path d="M659.500 288l3 15h-6zM659.500 447l3-15h-6zM658.500 448l3 15h-6zM658.500 621l3-15h-6z" />
        <path d="M534 648.500l15-3v6zM570.500 648.500l-15-3v6z" />
        <path d="M560 253l-6 13-5-4zM604 398l-10 10-4-5z" />
        <path d="M575 285h5v5h-5zM575 369.500h5v5h-5zM618.500 445h5v5h-5zM618.500 568h5v5h-5z" />
        <g className={dimText} textAnchor="middle">
          <text transform="translate(580 217) rotate(-53)">R30</text>
          <text transform="translate(629 373) rotate(-35)">R60</text>
          <text transform="translate(653 334) rotate(-90)">110</text>
          <text transform="translate(653 526) rotate(-90)">120</text>
          <text x="558" y="643">25</text>
        </g>
      </g>
    </svg>;
}

function Triad() {
  return <svg viewBox="75 624 52 54" className="absolute bottom-[42px] left-10 h-[54px] w-[52px]">
      <path d="M82.500 649.500h20v19h-20z" fill="#cbcfcd" stroke="#aaa" />
      <path d="M83 645v23" stroke="#7fae7f" strokeWidth="2" />
      <path d="M83 636l2.500 10-2.500 3-2.500-3z" fill="#2f8f2f" />
      <path d="M86 669.500h18" stroke="#a01c1c" />
      <path d="M103 667l12 2.500-12 2.500z" fill="#d42a2a" />
      <circle cx="83" cy="670" r="4" fill="#889" />
      <circle cx="83" cy="669" r="2.500" fill="#1238d8" />
      <g className={axisText} textAnchor="middle">
        <text x="82.500" y="636" fill="#3aa03a">Y</text>
        <text x="120" y="674" fill="#d84848">X</text>
        <text x="82.500" y="674" fill="#1a44e0">Z</text>
      </g>
    </svg>;
}

export default function App() {
  return <div className={clsx('flex h-screen flex-col overflow-hidden bg-[#1b1b1b] text-black', cjk)}>
      <TitleBar />
      <div className="flex min-h-0 flex-1 flex-col border-l border-r-2 border-l-[#1b1b1b] border-r-[#1b1b1b]">
        <MenuBar />
        <Toolbars />
        <SelectionBar />
        <StatusBar />
        <div className="flex min-h-0 flex-1">
          <ResourceBar />
          <main className="relative min-w-0 flex-1 overflow-hidden bg-[#d2d3d7]">
            <Sketch />
            <Triad />
          </main>
        </div>
      </div>
      <footer className="h-2 shrink-0 border-y border-black bg-linear-to-b from-[#3c3c3c] to-[#202020]" />
    </div>;
}
